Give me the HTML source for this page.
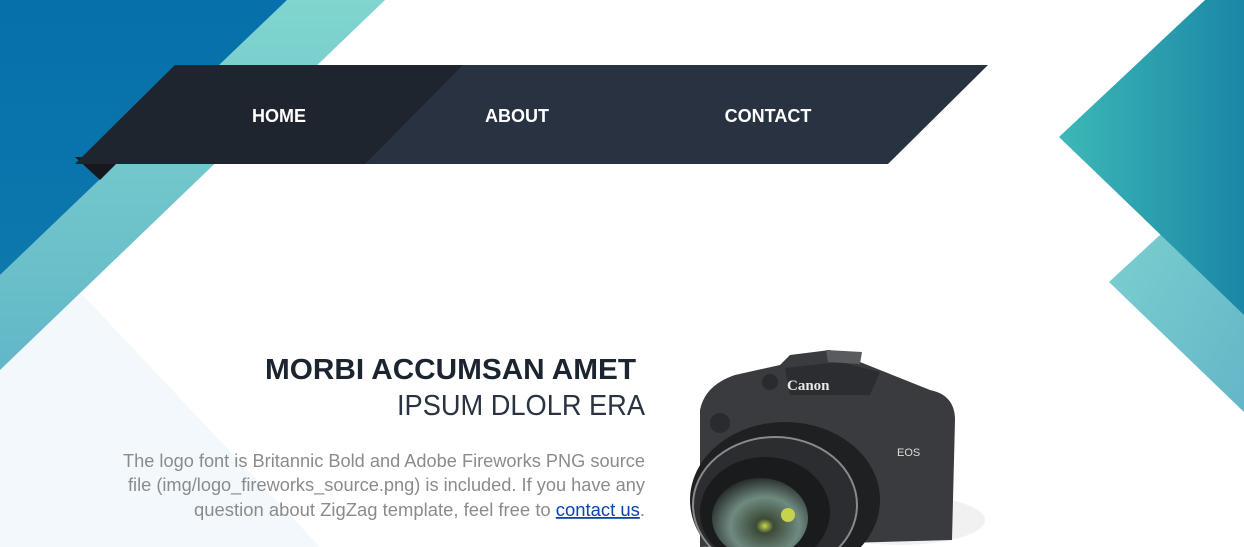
<!DOCTYPE html>
<html><head><meta charset="utf-8"><style>
html,body{margin:0;padding:0;background:#fff;width:1244px;height:547px;overflow:hidden}
svg{display:block;overflow:hidden}
</style></head><body>
<svg width="1244" height="547" viewBox="0 0 1244 547" xmlns="http://www.w3.org/2000/svg">
<defs>
<linearGradient id="rg" x1="0" y1="0" x2="1" y2="0"><stop offset="0" stop-color="#3db8b6"/><stop offset="1" stop-color="#1a87a6"/></linearGradient>
<linearGradient id="rg2" x1="0" y1="0" x2="1" y2="1"><stop offset="0" stop-color="#7fd3d0"/><stop offset="1" stop-color="#65b6c8"/></linearGradient>
<linearGradient id="tg" x1="0" y1="0" x2="0" y2="1"><stop offset="0" stop-color="#80d5cf"/><stop offset="1" stop-color="#62b7c8"/></linearGradient>
<linearGradient id="bg" x1="0" y1="0" x2="0" y2="1"><stop offset="0" stop-color="#0570ab"/><stop offset="1" stop-color="#0c78ac"/></linearGradient>
<radialGradient id="lens" cx="0.55" cy="0.6" r="0.6"><stop offset="0" stop-color="#c8d84a"/><stop offset="0.15" stop-color="#3c4a38"/><stop offset="0.6" stop-color="#6f8a80"/><stop offset="1" stop-color="#2a302e"/></radialGradient>
<clipPath id="cp"><rect x="0" y="0" width="1244" height="547"/></clipPath>
</defs>
<g clip-path="url(#cp)">
<polygon points="0,370 80,292 320,547 0,547" fill="#f2f8fb"/>
<polygon points="287,0 385,0 0,370 0,275" fill="url(#tg)"/>
<polygon points="0,0 287,0 0,275" fill="url(#bg)"/>
<polygon points="1160,235 1244,155 1244,412 1109,282" fill="url(#rg2)"/>
<polygon points="1205,0 1244,0 1244,315 1059,137" fill="url(#rg)"/>
<polygon points="75,157 100,180 122,158" fill="#16181d"/>
<polygon points="175,65 988,65 888,164 75,164" fill="#283241"/>
<polygon points="175,65 463,65 365,164 75,164" fill="#1f252f"/>
<g font-family="Liberation Sans, sans-serif" font-weight="bold" font-size="18" fill="#fff" text-anchor="middle">
<text x="279" y="122">HOME</text>
<text x="517" y="122">ABOUT</text>
<text x="768" y="122">CONTACT</text>
</g>
<g font-family="Liberation Sans, sans-serif" text-anchor="end">
<text x="636" y="379" font-size="29" font-weight="bold" fill="#1c2430" textLength="371" lengthAdjust="spacingAndGlyphs">MORBI ACCUMSAN AMET</text>
<text x="645" y="415" font-size="29" fill="#2a3340" textLength="248" lengthAdjust="spacingAndGlyphs">IPSUM DLOLR ERA</text>
<text x="645" y="467" font-size="18" fill="#8b8b8b" textLength="522" lengthAdjust="spacingAndGlyphs">The logo font is Britannic Bold and Adobe Fireworks PNG source</text>
<text x="645" y="491" font-size="18" fill="#8b8b8b" textLength="517" lengthAdjust="spacingAndGlyphs">file (img/logo_fireworks_source.png) is included. If you have any</text>
<text x="645" y="516" font-size="18" fill="#8b8b8b" textLength="451" lengthAdjust="spacingAndGlyphs">question about ZigZag template, feel free to <tspan fill="#0645ad" text-decoration="underline">contact us</tspan>.</text>
</g>
<ellipse cx="900" cy="520" rx="85" ry="25" fill="#e8e8e8" opacity="0.6"/>
<path d="M700,410 Q705,385 735,375 L780,365 L790,355 L830,350 L880,370 L930,390 Q955,395 955,420 L952,540 L700,547 Z" fill="#3a3b3e"/>
<path d="M785,368 L840,362 L880,372 L870,395 L790,395 Z" fill="#2c2d30"/>
<path d="M826,350 L862,352 L860,364 L828,362 Z" fill="#5a5b5e"/>
<text x="787" y="390" font-family="Liberation Serif, serif" font-weight="bold" font-size="15" fill="#e8e8e8">Canon</text>
<text x="897" y="456" font-family="Liberation Sans, sans-serif" font-size="11" fill="#ddd">EOS</text>
<circle cx="720" cy="423" r="10" fill="#2a2b2e"/>
<circle cx="770" cy="382" r="8" fill="#2a2b2e"/>
<ellipse cx="785" cy="500" rx="95" ry="78" fill="#1f2022"/>
<ellipse cx="775" cy="505" rx="82" ry="68" fill="#2c2d30" stroke="#8a8a8a" stroke-width="2"/>
<ellipse cx="765" cy="512" rx="65" ry="55" fill="#1a1b1d"/>
<ellipse cx="760" cy="518" rx="48" ry="40" fill="url(#lens)"/>
<circle cx="788" cy="515" r="7" fill="#c7d34a"/>
</g>
</svg>
</body></html>
